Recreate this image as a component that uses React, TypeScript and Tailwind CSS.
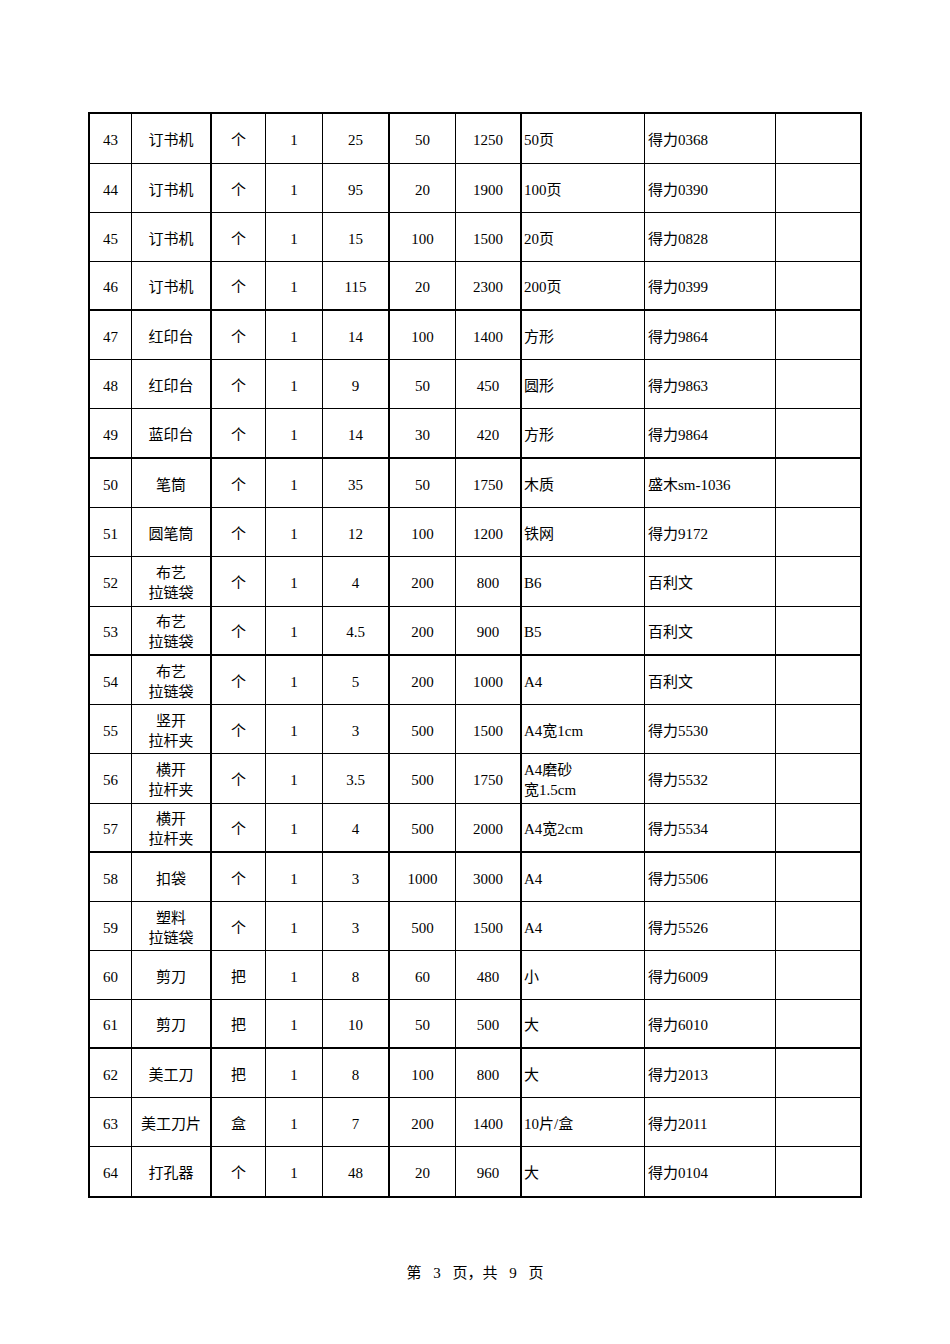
import React from "react";

type Row = {
  no: number;
  name: string;
  unit: string;
  qty: string;
  price: string;
  count: string;
  total: string;
  spec: string;
  brand: string;
  thick?: boolean;
  tall?: boolean;
};

const rows: Row[] = [
  { no: 43, name: "订书机", unit: "个", qty: "1", price: "25", count: "50", total: "1250", spec: "50页", brand: "得力0368", tall: true },
  { no: 44, name: "订书机", unit: "个", qty: "1", price: "95", count: "20", total: "1900", spec: "100页", brand: "得力0390" },
  { no: 45, name: "订书机", unit: "个", qty: "1", price: "15", count: "100", total: "1500", spec: "20页", brand: "得力0828" },
  { no: 46, name: "订书机", unit: "个", qty: "1", price: "115", count: "20", total: "2300", spec: "200页", brand: "得力0399", thick: true },
  { no: 47, name: "红印台", unit: "个", qty: "1", price: "14", count: "100", total: "1400", spec: "方形", brand: "得力9864" },
  { no: 48, name: "红印台", unit: "个", qty: "1", price: "9", count: "50", total: "450", spec: "圆形", brand: "得力9863" },
  { no: 49, name: "蓝印台", unit: "个", qty: "1", price: "14", count: "30", total: "420", spec: "方形", brand: "得力9864", thick: true, tall: true },
  { no: 50, name: "笔筒", unit: "个", qty: "1", price: "35", count: "50", total: "1750", spec: "木质", brand: "盛木sm-1036" },
  { no: 51, name: "圆笔筒", unit: "个", qty: "1", price: "12", count: "100", total: "1200", spec: "铁网", brand: "得力9172" },
  { no: 52, name: "布艺\n拉链袋", unit: "个", qty: "1", price: "4", count: "200", total: "800", spec: "B6", brand: "百利文", tall: true },
  { no: 53, name: "布艺\n拉链袋", unit: "个", qty: "1", price: "4.5", count: "200", total: "900", spec: "B5", brand: "百利文", thick: true },
  { no: 54, name: "布艺\n拉链袋", unit: "个", qty: "1", price: "5", count: "200", total: "1000", spec: "A4", brand: "百利文" },
  { no: 55, name: "竖开\n拉杆夹", unit: "个", qty: "1", price: "3", count: "500", total: "1500", spec: "A4宽1cm", brand: "得力5530" },
  { no: 56, name: "横开\n拉杆夹", unit: "个", qty: "1", price: "3.5", count: "500", total: "1750", spec: "A4磨砂\n宽1.5cm", brand: "得力5532", tall: true },
  { no: 57, name: "横开\n拉杆夹", unit: "个", qty: "1", price: "4", count: "500", total: "2000", spec: "A4宽2cm", brand: "得力5534", thick: true },
  { no: 58, name: "扣袋", unit: "个", qty: "1", price: "3", count: "1000", total: "3000", spec: "A4", brand: "得力5506" },
  { no: 59, name: "塑料\n拉链袋", unit: "个", qty: "1", price: "3", count: "500", total: "1500", spec: "A4", brand: "得力5526" },
  { no: 60, name: "剪刀", unit: "把", qty: "1", price: "8", count: "60", total: "480", spec: "小", brand: "得力6009" },
  { no: 61, name: "剪刀", unit: "把", qty: "1", price: "10", count: "50", total: "500", spec: "大", brand: "得力6010", thick: true },
  { no: 62, name: "美工刀", unit: "把", qty: "1", price: "8", count: "100", total: "800", spec: "大", brand: "得力2013" },
  { no: 63, name: "美工刀片", unit: "盒", qty: "1", price: "7", count: "200", total: "1400", spec: "10片/盒", brand: "得力2011" },
  { no: 64, name: "打孔器", unit: "个", qty: "1", price: "48", count: "20", total: "960", spec: "大", brand: "得力0104" },
];

const Lines: React.FC<{ text: string }> = ({ text }) => (
  <>
    {text.split("\n").map((t, i) => (
      <div key={i}>{t}</div>
    ))}
  </>
);

export default function App() {
  return (
    <div
      className="w-[950px] min-h-[1344px] bg-white text-black text-[15px] leading-[20px] pt-[112px]"
      style={{ fontFamily: '"Liberation Serif", "Noto Sans CJK SC", serif' }}
    >
      {/* table */}
      <div className="ml-[88px] w-[774px] border-2 border-black">
        {rows.map((r, idx) => {
          const last = idx === rows.length - 1;
          return (
            <div
              key={r.no}
              className={`grid grid-cols-[42px_80px_54px_57px_67px_66px_66px_123px_131px_84px] ${r.tall ? "h-[50px]" : "h-[49px]"} ${
                last ? "" : r.thick ? "border-b-2 border-black" : "border-b border-black"
              }`}
            >
              <div className="flex items-center justify-center pt-[3px] border-r border-black">{r.no}</div>
              <div className="flex flex-col items-center justify-center text-center pt-[3px] border-r-2 border-black">
                <Lines text={r.name} />
              </div>
              <div className="flex items-center justify-center pt-[3px] border-r border-black">{r.unit}</div>
              <div className="flex items-center justify-center pt-[3px] border-r border-black">{r.qty}</div>
              <div className="flex items-center justify-center pt-[3px] border-r-2 border-black">{r.price}</div>
              <div className="flex items-center justify-center pt-[3px] border-r border-black">{r.count}</div>
              <div className="flex items-center justify-center pt-[3px] border-r-2 border-black">{r.total}</div>
              <div className="flex flex-col justify-center pl-[2px] pt-[3px] border-r border-black">
                <Lines text={r.spec} />
              </div>
              <div className="flex items-center pl-[3px] pt-[3px] border-r border-black">{r.brand}</div>
              <div />
            </div>
          );
        })}
      </div>

      {/* footer */}
      <div className="mt-[65px] text-center [word-spacing:8px]">第 3 页，共 9 页</div>
    </div>
  );
}
